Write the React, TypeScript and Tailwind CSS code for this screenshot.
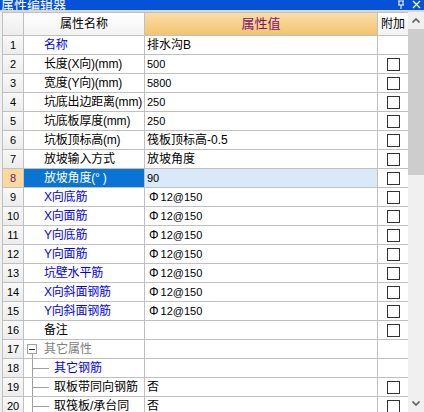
import React from 'react';

type Row = {
  no: number;
  name: string;
  value?: string;
  blue?: boolean;
  rebar?: boolean;
  check?: boolean;
  group?: boolean;
  child?: boolean;
  selected?: boolean;
};

const rows: Row[] = [
  { no: 1, name: '名称', value: '排水沟B', blue: true },
  { no: 2, name: '长度(X向)(mm)', value: '500', check: true },
  { no: 3, name: '宽度(Y向)(mm)', value: '5800', check: true },
  { no: 4, name: '坑底出边距离(mm)', value: '250', check: true },
  { no: 5, name: '坑底板厚度(mm)', value: '250', check: true },
  { no: 6, name: '坑板顶标高(m)', value: '筏板顶标高-0.5', check: true },
  { no: 7, name: '放坡输入方式', value: '放坡角度', check: true },
  { no: 8, name: '放坡角度(° )', value: '90', check: true, selected: true },
  { no: 9, name: 'X向底筋', value: '12@150', blue: true, rebar: true, check: true },
  { no: 10, name: 'X向面筋', value: '12@150', blue: true, rebar: true, check: true },
  { no: 11, name: 'Y向底筋', value: '12@150', blue: true, rebar: true, check: true },
  { no: 12, name: 'Y向面筋', value: '12@150', blue: true, rebar: true, check: true },
  { no: 13, name: '坑壁水平筋', value: '12@150', blue: true, rebar: true, check: true },
  { no: 14, name: 'X向斜面钢筋', value: '12@150', blue: true, rebar: true, check: true },
  { no: 15, name: 'Y向斜面钢筋', value: '12@150', blue: true, rebar: true, check: true },
  { no: 16, name: '备注', value: '', check: true },
  { no: 17, name: '其它属性', group: true },
  { no: 18, name: '其它钢筋', blue: true, child: true },
  { no: 19, name: '取板带同向钢筋', value: '否', child: true, check: true },
  { no: 20, name: '取筏板/承台同', value: '否', child: true, check: true },
];

const font = { fontFamily: '"Liberation Sans", "Noto Sans CJK SC", sans-serif' };

function Checkbox() {
  return <div className="w-[13px] h-[13px] border border-[#333333] bg-white" />;
}

function TreeGlyph({ group }: { group?: boolean }) {
  if (group) {
    return (
      <div className="relative w-[20px] h-full shrink-0">
        <div className="absolute left-[3px] top-[4px] w-[10px] h-[10px] border border-[#a0a0a0] bg-white flex items-center justify-center">
          <div className="w-[6px] h-px bg-[#333333]" />
        </div>
        <div className="absolute left-[8px] top-[14px] bottom-0 w-px bg-[#a0a0a0]" />
      </div>
    );
  }
  return (
    <div className="relative w-[30px] h-full shrink-0">
      <div className="absolute left-[8px] top-0 bottom-0 w-px bg-[#a0a0a0]" />
      <div className="absolute left-[8px] top-[9px] w-[17px] h-px bg-[#a0a0a0]" />
    </div>
  );
}

function DataRow({ row }: { row: Row }) {
  const nameColor = row.selected
    ? 'text-white'
    : row.group
    ? 'text-[#808080]'
    : row.blue
    ? 'text-[#0000ff]'
    : 'text-black';
  return (
    <div className="flex h-[19px] text-[12px] leading-[18px]">
      <div
        className={`w-[21px] shrink-0 border-r border-b border-[#c0c0c0] flex items-center justify-center text-[11px] ${
          row.selected ? 'bg-[#fcd79e] text-[#6b1a6b]' : 'bg-gradient-to-b from-[#f9f9f9] to-[#ececec] text-black'
        }`}
      >
        {row.no}
      </div>
      <div
        className={`w-[121px] shrink-0 border-r border-b border-[#c0c0c0] flex items-center whitespace-nowrap overflow-hidden ${
          row.selected ? 'bg-[#0a74d4]' : 'bg-white'
        } ${nameColor}`}
      >
        {row.group || row.child ? (
          <>
            <TreeGlyph group={row.group} />
            <span>{row.name}</span>
          </>
        ) : (
          <span className="pl-[20px] tracking-[-0.2px]">{row.name}</span>
        )}
      </div>
      <div
        className={`w-[233px] shrink-0 border-r border-b border-[#c0c0c0] flex items-center whitespace-nowrap pl-[2px] ${
          row.selected ? 'bg-[#d9e9f8]' : 'bg-white'
        }`}
      >
        {row.rebar ? (
          <span className="pl-[2px] text-[11px]">
            <span className="text-[12px] mr-[2px]">Φ</span>
            {row.value}
          </span>
        ) : (
          <span className={/^[0-9]/.test(row.value ?? '') ? 'text-[11px]' : ''}>{row.value}</span>
        )}
      </div>
      <div className="w-[31px] shrink-0 border-r border-b border-[#c0c0c0] bg-white flex items-center justify-center">
        {row.check ? <Checkbox /> : null}
      </div>
    </div>
  );
}

export default function App() {
  return (
    <div className="w-[424px] h-[412px] overflow-hidden bg-[#f0f0f0] flex flex-col" style={font}>
      {/* Title bar */}
      <div className="h-[10px] shrink-0 bg-[#0552d8] flex items-end justify-between overflow-hidden">
        <span className="text-white text-[13px] leading-[13px] pl-[1px] mb-[-2px]">属性编辑器</span>
        <div className="flex items-center gap-[7px] pr-[3px] mb-[1px]">
          <svg width="8" height="9" viewBox="0 0 8 9" className="text-white">
            <path d="M1 1h6M2 1v4M6 1v4M1 5h6M4 5v4" stroke="currentColor" strokeWidth="1" fill="none" />
          </svg>
          <svg width="9" height="9" viewBox="0 0 9 9">
            <path d="M1 1l7 7M8 1l-7 7" stroke="white" strokeWidth="1.2" />
          </svg>
        </div>
      </div>
      <div className="h-[2px] shrink-0 bg-[#d8d8d8]" />

      <div className="flex flex-1 min-h-0">
        {/* Grid */}
        <div className="w-[408px] shrink-0 pl-[2px] bg-[#f0f0f0]">
          <div className="border-l border-t border-[#c0c0c0] bg-white">
            {/* Header */}
            <div className="flex h-[23px] text-[12px]">
              <div className="w-[21px] shrink-0 border-r border-b border-[#c0c0c0] bg-gradient-to-b from-[#fafafa] to-[#ededed]" />
              <div className="w-[121px] shrink-0 border-r border-b border-[#c0c0c0] bg-gradient-to-b from-[#ffffff] to-[#f2f2f2] flex items-center justify-center text-black">
                属性名称
              </div>
              <div className="w-[233px] shrink-0 border-r border-b border-[#c0c0c0] bg-gradient-to-b from-[#fbdca6] to-[#f2c46c] flex items-center justify-center text-[#7b1674] text-[13px]">
                属性值
              </div>
              <div className="w-[31px] shrink-0 border-r border-b border-[#c0c0c0] bg-gradient-to-b from-[#ffffff] to-[#f2f2f2] flex items-center justify-center text-black">
                附加
              </div>
            </div>
            {rows.map((r) => (
              <DataRow key={r.no} row={r} />
            ))}
          </div>
        </div>

        {/* Scrollbar */}
        <div className="w-[16px] shrink-0 bg-[#f0f0f0] flex flex-col items-center relative">
          <div className="h-[17px] flex items-center justify-center">
            <svg width="8" height="5" viewBox="0 0 8 5">
              <path d="M0.5 4.5L4 1L7.5 4.5" stroke="#606060" strokeWidth="1.6" fill="none" />
            </svg>
          </div>
          <div className="w-[16px] h-[146px] bg-[#cdcdcd]" />
          <div className="absolute bottom-[2px] left-0 w-[16px] h-[14px] flex items-center justify-center">
            <svg width="8" height="5" viewBox="0 0 8 5">
              <path d="M0.5 0.5L4 4L7.5 0.5" stroke="#606060" strokeWidth="1.6" fill="none" />
            </svg>
          </div>
        </div>
      </div>
    </div>
  );
}
